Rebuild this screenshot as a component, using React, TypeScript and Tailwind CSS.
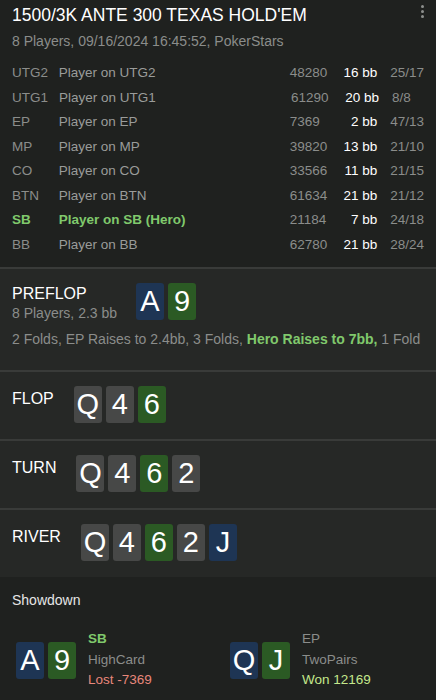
import React from "react";

type CardColor = "gray" | "green" | "blue";

const cardBg: Record<CardColor, string> = {
  gray: "bg-[#474847]",
  green: "bg-[#2b5a24]",
  blue: "bg-[#1e3554]",
};

function Card({ rank, color }: { rank: string; color: CardColor }) {
  return (
    <div
      className={`w-[28px] h-[37px] rounded-[3px] flex items-center justify-center text-[29px] leading-none text-white ${cardBg[color]}`}
    >
      {rank}
    </div>
  );
}

const players = [
  { pos: "UTG2", name: "Player on UTG2", stack: "48280", bb: "16 bb", stats: "25/17" },
  { pos: "UTG1", name: "Player on UTG1", stack: "61290", bb: "20 bb", stats: "8/8" },
  { pos: "EP", name: "Player on EP", stack: "7369", bb: "2 bb", stats: "47/13" },
  { pos: "MP", name: "Player on MP", stack: "39820", bb: "13 bb", stats: "21/10" },
  { pos: "CO", name: "Player on CO", stack: "33566", bb: "11 bb", stats: "21/15" },
  { pos: "BTN", name: "Player on BTN", stack: "61634", bb: "21 bb", stats: "21/12" },
  { pos: "SB", name: "Player on SB (Hero)", stack: "21184", bb: "7 bb", stats: "24/18", hero: true },
  { pos: "BB", name: "Player on BB", stack: "62780", bb: "21 bb", stats: "28/24" },
];

const streets: { label: string; cards: [string, CardColor][] }[] = [
  { label: "FLOP", cards: [["Q", "gray"], ["4", "gray"], ["6", "green"]] },
  { label: "TURN", cards: [["Q", "gray"], ["4", "gray"], ["6", "green"], ["2", "gray"]] },
  { label: "RIVER", cards: [["Q", "gray"], ["4", "gray"], ["6", "green"], ["2", "gray"], ["J", "blue"]] },
];

export default function App() {
  return (
    <div className="w-[436px] h-[700px] bg-[#1f211f] overflow-hidden font-['Liberation_Sans',Arial,sans-serif] select-none">
      {/* Header + players */}
      <div className="relative px-3 pt-[4px] pb-[10px]">
        <h1 className="text-[17.5px] leading-[22px] text-white">1500/3K ANTE 300 TEXAS HOLD'EM</h1>
        <p className="mt-[4px] text-[14px] leading-[22px] text-[#8b8d8b]">
          8 Players, 09/16/2024 16:45:52, PokerStars
        </p>
        <div className="absolute right-[12px] top-[5px] flex flex-col gap-[2px]">
          <span className="w-[3px] h-[3px] rounded-full bg-[#8d8f8d]" />
          <span className="w-[3px] h-[3px] rounded-full bg-[#8d8f8d]" />
          <span className="w-[3px] h-[3px] rounded-full bg-[#8d8f8d]" />
        </div>

        <div className="mt-[9px] text-[13.5px]">
          {players.map((p) => (
            <div key={p.pos} className="flex items-center h-[24.5px]">
              <span
                className={`w-[47px] ${p.hero ? "text-[#80c96c] font-bold" : "text-[#8b8d8b]"}`}
              >
                {p.pos}
              </span>
              <span
                className={`w-[232px] ${p.hero ? "text-[#80c96c] font-bold" : "text-[#9a9c9a]"}`}
              >
                {p.name}
              </span>
              <span className="w-[42px] text-[#8b8d8b]">{p.stack}</span>
              <span className="w-[46px] text-right text-white">{p.bb}</span>
              <span className="ml-[13px] text-[#8b8d8b]">{p.stats}</span>
            </div>
          ))}
        </div>
      </div>

      {/* Streets */}
      <div className="bg-[#262826] border-t-2 border-[#393b39]">
        <div className="px-3 pt-[14px] pb-[20px]">
          <div className="flex items-start">
            <div className="w-[124px]">
              <div className="text-[16px] leading-[20px] text-white mt-[1px]">PREFLOP</div>
              <div className="text-[14px] leading-[18px] text-[#8b8d8b]">8 Players, 2.3 bb</div>
            </div>
            <div className="flex gap-[4px]">
              <Card rank="A" color="blue" />
              <Card rank="9" color="green" />
            </div>
          </div>
          <p className="mt-[7px] text-[14px] text-[#8b8d8b] whitespace-nowrap">
            2 Folds, EP Raises to 2.4bb, 3 Folds,{" "}
            <span className="text-[#80c96c] font-bold">Hero Raises to 7bb,</span> 1 Fold
          </p>
        </div>

        {streets.map((s) => (
          <div key={s.label} className="border-t-2 border-[#393b39] px-3 pt-[14px] pb-[16px] flex items-start">
            <span className="text-[16px] leading-[20px] text-white mt-[3px] mr-[20px]">{s.label}</span>
            <div className="flex gap-[4px]">
              {s.cards.map(([r, c], i) => (
                <Card key={i} rank={r} color={c} />
              ))}
            </div>
          </div>
        ))}
      </div>

      {/* Showdown */}
      <div className="px-3 pt-[13px]">
        <div className="text-[14px] text-[#e6e6e6]">Showdown</div>
        <div className="mt-[20px] flex pl-[4px]">
          <div className="w-[214px] flex items-center">
            <div className="flex gap-[4px]">
              <Card rank="A" color="blue" />
              <Card rank="9" color="green" />
            </div>
            <div className="ml-[12px] text-[13.5px] leading-[20.5px] -mt-[2px]">
              <div className="text-[#80c96c] font-bold">SB</div>
              <div className="text-[#8b8d8b]">HighCard</div>
              <div className="text-[#e8877b]">Lost -7369</div>
            </div>
          </div>
          <div className="flex items-center">
            <div className="flex gap-[4px]">
              <Card rank="Q" color="blue" />
              <Card rank="J" color="green" />
            </div>
            <div className="ml-[12px] text-[13.5px] leading-[20.5px] -mt-[2px]">
              <div className="text-[#8b8d8b]">EP</div>
              <div className="text-[#8b8d8b]">TwoPairs</div>
              <div className="text-[#c4e88c]">Won 12169</div>
            </div>
          </div>
        </div>
      </div>
    </div>
  );
}
